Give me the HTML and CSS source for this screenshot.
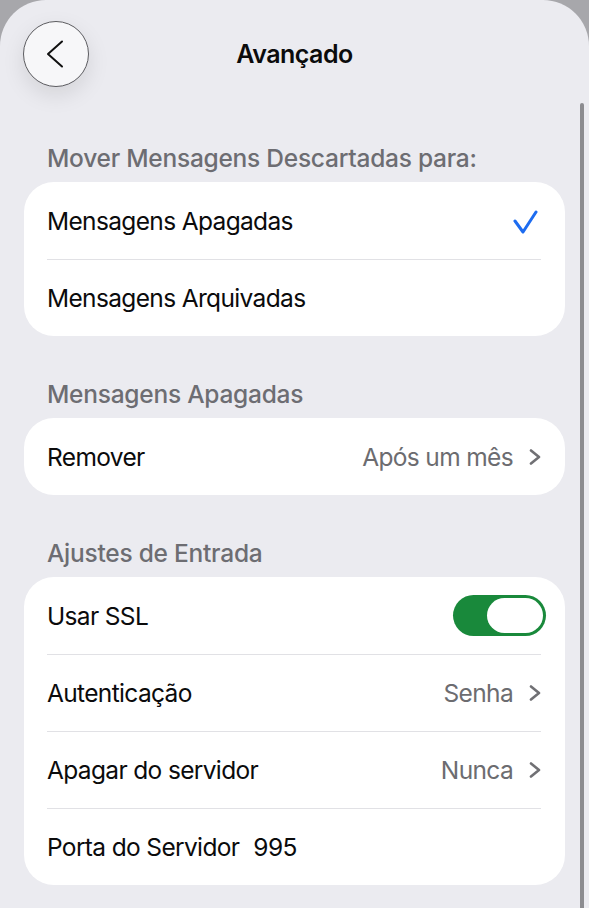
FILE: index.html
```html
<!DOCTYPE html>
<html lang="pt">
<head>
  <meta charset="UTF-8" />
  <meta name="viewport" content="width=device-width, initial-scale=1.0"/>
  <title>Avançado</title>
  <link rel="stylesheet" href="styles.css">
</head>
<body>

  <div class="sheet">
    <div class="nav">
      <button class="back" aria-label="Voltar">
        <svg width="18" height="28" viewBox="0 0 18 28"><path d="M16 1.5 L2 14 L16 26.5" /></svg>
      </button>
      <div class="title">Avançado</div>
      <div></div>
    </div>

    <div class="content">
      <div class="section">
        <div class="section-title">Mover Mensagens Descartadas para:</div>
        <div class="card">
          <div class="row">
            <span class="label">Mensagens Apagadas</span>
            <svg class="check" width="26" height="26" viewBox="0 0 26 26"><path d="M3 13 L11 24 L24 4" /></svg>
          </div>
          <div class="row">
            <span class="label">Mensagens Arquivadas</span>
          </div>
        </div>
      </div>

      <div class="section">
        <div class="section-title">Mensagens Apagadas</div>
        <div class="card">
          <div class="row">
            <span class="label">Remover</span>
            <span class="value">Após um mês</span>
            <svg class="chevron" width="12" height="16" viewBox="0 0 12 16"><path d="M2 1.5 L10 8 L2 14.5" /></svg>
          </div>
        </div>
      </div>

      <div class="section">
        <div class="section-title">Ajustes de Entrada</div>
        <div class="card">
          <div class="row">
            <span class="label">Usar SSL</span>
            <div class="toggle on"><div class="knob"></div></div>
          </div>
          <div class="row">
            <span class="label">Autenticação</span>
            <span class="value">Senha</span>
            <svg class="chevron" width="12" height="16" viewBox="0 0 12 16"><path d="M2 1.5 L10 8 L2 14.5" /></svg>
          </div>
          <div class="row">
            <span class="label">Apagar do servidor</span>
            <span class="value">Nunca</span>
            <svg class="chevron" width="12" height="16" viewBox="0 0 12 16"><path d="M2 1.5 L10 8 L2 14.5" /></svg>
          </div>
          <div class="row">
            <span class="label">Porta do Servidor</span>
            <span class="port">995</span>
          </div>
        </div>
      </div>
    </div>

    <div class="scrollbar"></div>
  </div>

</body>
</html>
```

FILE: styles.css
```css
body {
  margin: 0;
  background-color: #a7a7ab;
  font-family: Inter, "Noto Sans", sans-serif;
  color: #0b0b0c;
}

.sheet {
  position: relative;
  min-height: 908px;
  background-color: #ebebf0;
  border-radius: 46px 46px 0 0;
  overflow: hidden;
}

.nav {
  display: grid;
  grid-template-columns: 66px 1fr 66px;
  align-items: center;
  padding: 21px 23px 0;
}

.back {
  width: 66px;
  height: 66px;
  border-radius: 50%;
  border: 1px solid #5c5c60;
  background: #f7f7f9;
  box-shadow: 0 8px 22px rgba(0,0,0,0.10);
  display: flex;
  align-items: center;
  justify-content: center;
  padding: 0 3px 0 0;
}

.back path {
  fill: none;
  stroke: #111;
  stroke-width: 2;
  stroke-linecap: round;
  stroke-linejoin: round;
}

.title {
  text-align: center;
  font-size: 25px;
  font-weight: 600;
  letter-spacing: -0.5px;
}

.content {
  padding: 57px 24px 0;
}

.section + .section {
  margin-top: 44px;
}

.section-title {
  padding: 0 0 10px 23px;
  font-size: 24.5px;
  line-height: 28px;
  font-weight: 500;
  color: #6d6d72;
  letter-spacing: -0.25px;
}

.card {
  background: #fff;
  border-radius: 30px;
}

.row {
  display: flex;
  align-items: center;
  height: 77px;
  box-sizing: border-box;
  margin: 0 24px 0 23px;
  font-size: 24.5px;
  letter-spacing: -0.65px;
}

.row + .row {
  border-top: 1px solid #e1e1e5;
}

.label {
  flex-grow: 1;
}

.row .port {
  flex-grow: 1;
  margin-left: 14px;
}

.row .label:has(+ .port) {
  flex-grow: 0;
}

.value {
  color: #6c6c70;
  margin-right: 16px;
}

.chevron path {
  fill: none;
  stroke: #707074;
  stroke-width: 2.6;
  stroke-linecap: round;
  stroke-linejoin: round;
}

.check {
  margin-right: 3px;
}

.check path {
  fill: none;
  stroke: #1d6cf0;
  stroke-width: 3;
  stroke-linecap: round;
  stroke-linejoin: round;
}

.toggle {
  width: 93px;
  height: 41px;
  box-sizing: border-box;
  border-radius: 21px;
  background: #19893b;
  padding: 3px;
  display: flex;
  justify-content: flex-end;
  margin-right: -5px;
}

.knob {
  width: 56px;
  height: 35px;
  border-radius: 18px;
  background: #fff;
}

.scrollbar {
  position: absolute;
  right: 5px;
  top: 103px;
  bottom: 0;
  width: 4px;
  border-radius: 2px 2px 0 0;
  background: #8c8c90;
}
```
